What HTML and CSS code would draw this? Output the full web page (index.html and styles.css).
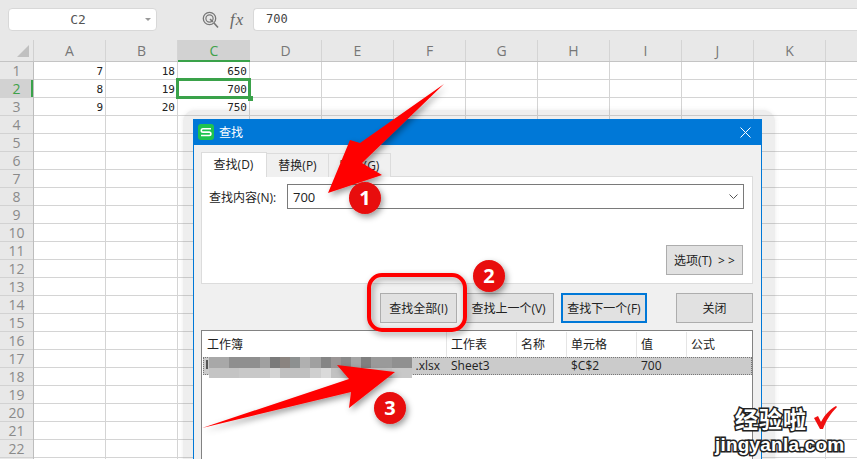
FILE: index.html
```html
<!DOCTYPE html>
<html lang="zh">
<head>
<meta charset="utf-8">
<title>查找</title>
<link rel="stylesheet" href="styles.css">
</head>
<body>
<div class="app">
  <div class="formula-bar">
    <div class="name-box"><span class="name-text">C2</span><span class="name-caret"></span></div>
    <svg class="zoom-icon" width="18" height="18" viewBox="0 0 18 18"><circle cx="7.500" cy="7.500" r="6.200" fill="none" stroke="#777" stroke-width="1.300"/><circle cx="7.500" cy="7.500" r="3.600" fill="none" stroke="#777" stroke-width="1.200"/><path d="M8 8l3 3M12 12l4 4.500" fill="none" stroke="#777" stroke-width="1.600"/></svg>
    <span class="fx">fx</span>
    <div class="formula-input">700</div>
  </div>
  <div class="col-head">
    <div class="corner"><span class="corner-tri"></span></div>
    <div class="col">A</div><div class="col">B</div><div class="col active">C</div><div class="col">D</div><div class="col">E</div><div class="col">F</div><div class="col">G</div><div class="col">H</div><div class="col">I</div><div class="col">J</div><div class="col">K</div><div class="col rest"></div>
  </div>
  <div class="sheet">
    <div class="row-head">
      <div class="rn">1</div><div class="rn active">2</div><div class="rn">3</div><div class="rn">4</div><div class="rn">5</div><div class="rn">6</div><div class="rn">7</div><div class="rn">8</div><div class="rn">9</div><div class="rn">10</div><div class="rn">11</div><div class="rn">12</div><div class="rn">13</div><div class="rn">14</div><div class="rn">15</div><div class="rn">16</div><div class="rn">17</div><div class="rn">18</div><div class="rn">19</div><div class="rn">20</div><div class="rn">21</div><div class="rn">22</div>
    </div>
    <div class="cells">
      <div class="cell">7</div><div class="cell">18</div><div class="cell">650</div>
      <div class="cell">8</div><div class="cell">19</div><div class="cell selected">700<span class="fill-handle"></span></div>
      <div class="cell">9</div><div class="cell">20</div><div class="cell">750</div>
    </div>
  </div>
</div>

<div class="dialog-halo"></div>
<section class="dialog">
  <header class="title-bar">
    <span class="logo"><svg width="16" height="16" viewBox="0 0 16 16"><rect width="16" height="16" rx="3" fill="#1ec34f"/><path d="M13 4.700H5a1.700 1.700 0 0 0 0 3.400h6.200a1.700 1.700 0 0 1 0 3.400H3" fill="none" stroke="#fff" stroke-width="1.600"/></svg></span>
    <span class="title">查找</span>
    <svg class="close-x" width="11" height="11" viewBox="0 0 11 11"><path d="M.5.5l10 10M10.500.5l-10 10" stroke="#fff" stroke-width="1"/></svg>
  </header>
  <div class="dialog-body">
    <div class="tabs">
      <div class="tab current">查找(D)</div>
      <div class="tab">替换(P)</div>
      <div class="tab">定位(G)</div>
    </div>
    <div class="panel">
      <div class="find-row">
        <label class="find-label">查找内容(N):</label>
        <div class="find-input"><span>700</span>
          <svg width="9" height="5" viewBox="0 0 9 5"><path d="M.5.500l4 4 4-4" fill="none" stroke="#555"/></svg>
        </div>
      </div>
      <button class="btn options">选项(T) &nbsp;&gt; &gt;</button>
    </div>
    <div class="actions">
      <button class="btn find-all">查找全部(I)</button>
      <button class="btn find-prev">查找上一个(V)</button>
      <button class="btn find-next">查找下一个(F)</button>
      <button class="btn close">关闭</button>
    </div>
    <div class="results">
      <div class="res-head">
        <div class="c1">工作簿</div><div class="c2">工作表</div><div class="c3">名称</div><div class="c4">单元格</div><div class="c5">值</div><div class="c6">公式</div>
      </div>
      <div class="res-row">
        <div class="c1 file">.xlsx</div><div class="c2">Sheet3</div><div class="c3"></div><div class="c4">$C$2</div><div class="c5">700</div><div class="c6"></div>
      </div>
      <div class="mosaic"><div class="mosaic-a"></div><div class="mosaic-b"></div></div>
    </div>
  </div>
</section>

<svg class="annot" width="857" height="459" viewBox="0 0 857 459">
  <defs><filter id="sh" x="-30%" y="-30%" width="160%" height="160%"><feDropShadow dx="2" dy="3" stdDeviation="3" flood-color="#000" flood-opacity=".4"/></filter></defs>
  <g filter="url(#sh)" fill="#f00">
    <path d="M444 84L360 143L350 140L328 193L382 175L362 163Z"/>
    <path d="M202 428L349 379L337 365L395 372L349 408L351 392Z"/>
    <rect x="369" y="275" width="96" height="55" rx="13" fill="none" stroke="#f00" stroke-width="4"/>
    <circle cx="365" cy="198" r="16" fill="#e80808"/>
    <circle cx="489" cy="276" r="16" fill="#e80808"/>
    <circle cx="390" cy="408" r="16" fill="#e80808"/>
  </g>
  <g class="badge-num"><text x="365" y="205">1</text><text x="489" y="283">2</text><text x="390" y="415">3</text></g>
</svg>

<div class="watermark">
  <div class="wm-top"><span class="wm-cn">经验啦</span><svg width="24" height="24" viewBox="0 0 24 24"><path d="M1 12l4-2 3 6C11 10 16 4 23 0l1 1C17 8 13 15 10 23H7Z" fill="#f01010"/></svg></div>
  <div class="wm-en">jingyanla.com</div>
</div>
</body>
</html>
```
FILE: styles.css
```css
* { box-sizing: border-box; }
html, body { margin: 0; padding: 0; width: 857px; height: 459px; overflow: hidden; background: #fff; }
body { position: relative; font-family: "Open Sans", "Noto Sans CJK SC", sans-serif; color: #222; }

/* Formula bar */
.formula-bar { height: 40px; background: #e8e8e8; display: flex; align-items: center; padding: 0 0 1px 8px; }
.name-box { width: 149px; height: 23px; background: #fff; border: 1px solid #d8d8d8; border-radius: 4px; display: flex; align-items: center; padding: 0 5px 0 0; }
.name-text { flex: 1; text-align: center; font-family: "DejaVu Sans Mono", monospace; font-size: 13px; color: #555; padding-left: 2px; }
.name-caret { width: 0; height: 0; border-left: 3px solid transparent; border-right: 3px solid transparent; border-top: 3px solid #999; }
.zoom-icon { margin-left: 45px; flex: none; }
.fx { font-family: "Liberation Serif", serif; font-style: italic; font-size: 17px; color: #666; margin-left: 10px; width: 23px; letter-spacing: 1px; }
.formula-input { flex: 1; height: 23px; background: #fff; border: 1px solid #d8d8d8; border-right: 0; border-radius: 4px 0 0 4px; font-family: "DejaVu Sans Mono", monospace; font-size: 12px; line-height: 21px; padding-left: 12px; color: #444; }

/* Column header */
.col-head { display: flex; height: 22px; background: #e8e8e8; border-bottom: 1px solid #c4c4c4; }
.corner { width: 34px; flex: none; border-right: 1px solid #d0d0d0; position: relative; }
.corner-tri { display: block; position: absolute; right: 4px; bottom: 4px; width: 0; height: 0; border-left: 12px solid transparent; border-bottom: 12px solid #c0c0c0; }
.col { width: 72px; flex: none; text-align: center; font-size: 14px; line-height: 21px; color: #777; border-right: 1px solid #d4d4d4; }
.col.rest { flex: 1; border-right: 0; }
.col.active { background: #d2d2d2; color: #3fa14a; border-bottom: 2px solid #3aa24a; height: 22px; border-right: 0; }

/* Sheet */
.sheet { display: flex; height: 397px; }
.row-head { width: 34px; flex: none; background: #e8e8e8; border-right: 1px solid #bdbdbd; }
.rn { height: 18px; text-align: center; font-size: 14px; line-height: 17px; color: #8a8a8a; border-bottom: 1px solid #d2d2d2; }
.rn.active { background: #d2d2d2; color: #3fa14a; box-shadow: inset -2px 0 0 #3aa24a; }
.cells {
  flex: 1;
  display: grid;
  grid-template-columns: repeat(3, 72px);
  grid-auto-rows: 18px;
  background-image:
    repeating-linear-gradient(to right, transparent 0 71px, #d4d4d4 71px 72px),
    repeating-linear-gradient(to bottom, transparent 0 17px, #d4d4d4 17px 18px);
}
.cell { font-family: "DejaVu Sans Mono", monospace; font-size: 11px; line-height: 19px; text-align: right; padding-right: 3px; color: #222; position: relative; }
.cell.selected::before { content: ""; position: absolute; inset: -2px -1px -1px -2px; border: 3px solid #3aa24a; }
.fill-handle { position: absolute; right: -3px; bottom: -3px; width: 5px; height: 5px; background: #3aa24a; }

/* Dialog */
.dialog-halo { position: absolute; left: 183px; top: 110px; width: 592px; height: 360px; background: rgba(120,120,120,.13); border-radius: 12px; box-shadow: 0 0 4px rgba(120,120,120,.15); }
.dialog { position: absolute; left: 193px; top: 119px; width: 569px; height: 345px; background: #f0f0f0; border: 1px solid #0078d7; border-top: 0; display: flex; flex-direction: column; }
.title-bar { height: 26px; flex: none; background: #0078d7; display: flex; align-items: center; padding-left: 4px; color: #fff; }
.logo { display: flex; width: 16px; height: 16px; }
.title { flex: 1; font-size: 12px; margin-left: 5px; }
.close-x { margin-right: 10px; }
.dialog-body { flex: 1; padding: 7px 8px 0 7px; display: flex; flex-direction: column; }
.tabs { display: flex; height: 24px; flex: none; position: relative; }
.tab { width: 62px; height: 24px; margin-top: 1px; text-align: center; font-size: 12px; line-height: 23px; background: #f0f0f0; border: 1px solid #dcdcdc; border-bottom: 0; border-left: 0; }
.tab.current { width: 66px; height: 25px; margin-top: 0; background: #fff; border-left: 1px solid #dcdcdc; line-height: 23px; padding-right: 1px; position: relative; z-index: 1; }
.panel { height: 108px; flex: none; background: #fff; border: 1px solid #dcdcdc; padding: 7px 8px 8px 7px; display: flex; flex-direction: column; justify-content: space-between; }
.find-row { display: flex; align-items: center; height: 25px; }
.find-label { width: 78px; flex: none; font-size: 12px; }
.find-input { flex: 1; height: 25px; border: 1px solid #7a7a7a; display: flex; align-items: center; justify-content: space-between; padding: 0 5px 0 5px; font-size: 13px; }
.btn { font-family: inherit; font-size: 12px; color: #222; background: #e1e1e1; border: 1px solid #adadad; padding: 0; height: 30px; }
.options { align-self: flex-end; width: 77px; margin-right: 1px; }
.actions { display: flex; justify-content: flex-end; align-items: center; height: 46px; flex: none; padding-top: 1px; }
.find-all { width: 77px; }
.find-prev { width: 91px; margin-left: 6px; }
.find-next { width: 86px; margin-left: 7px; border: 2px solid #0078d7; }
.close { width: 77px; margin-left: 29px; }
.results { flex: 1; background: #fff; border: 1px solid #828282; position: relative; width: 552px; }
.res-head { display: flex; height: 26px; align-items: center; font-size: 12px; color: #222; }
.res-head > div { height: 25px; line-height: 25px; border-right: 1px solid #e5e5e5; }
.res-row { display: flex; height: 18px; margin-left: 1px; width: 549px; background: #cbcbcb; outline: 1px dotted #777; outline-offset: -1px; font-size: 12px; line-height: 18px; }
.c1 { width: 245px; padding-left: 5px; }
.res-row .c1 { width: 244px; text-align: right; padding-right: 7px; }
.c2 { width: 70px; padding-left: 4px; }
.c3 { width: 50px; padding-left: 4px; }
.c4 { width: 70px; padding-left: 4px; }
.c5 { width: 50px; padding-left: 4px; }
.c6 { flex: 1; padding-left: 4px; }
.res-head .c6 { border-right: 0; }
.mosaic { position: absolute; left: 7px; top: 26px; width: 203px; }
.mosaic::before { content: ""; position: absolute; left: -3px; top: 3px; width: 2px; height: 9px; background: #555; }
.mosaic-a { height: 11px; background: linear-gradient(to right, #a8a8a8 0 10%, #8f8f8f 10% 25%, #a0a0a0 25% 30%, #7a7a7a 30% 35%, #8a8480 35% 40%, #8d9090 40% 45%, #b0b0b0 45% 50%, #a0a0a0 50% 55%, #858585 55% 60%, #9a9595 60% 65%, #8a8a8a 65% 70%, #a5a5a5 70% 75%, #808080 75% 80%, #9a9a9a 80% 90%, #909090 90% 100%); }
.mosaic-b { height: 10px; background: linear-gradient(to right, #c4c4c4 0 15%, #c8c8c8 15% 30%, #d4d4d4 30% 35%, #c0c0c0 35% 50%, #cfcfcf 50% 55%, #dadada 55% 60%, #c2c2c2 60% 90%, #c8c8c8 90% 100%); }

/* Annotations */
.annot { position: absolute; left: 0; top: 0; pointer-events: none; }
.badge-num text { font-family: "Open Sans", sans-serif; font-weight: 700; font-size: 20px; fill: #fff; text-anchor: middle; }

/* Watermark */
.watermark { position: absolute; left: 716px; top: 404px; width: 140px; font-family: "Noto Sans CJK SC", sans-serif; }
.wm-top { display: flex; align-items: center; padding-left: 19px; gap: 6px; height: 28px; }
.wm-cn { font-size: 23px; font-weight: 700; line-height: 28px; color: #fff; -webkit-text-stroke: 3px #222; paint-order: stroke fill; letter-spacing: 1px; }
.wm-en { font-family: "Liberation Sans", sans-serif; font-size: 19px; font-weight: 700; line-height: 20px; margin-top: 3px; margin-left: -1px; color: #fff; -webkit-text-stroke: 3px #222; paint-order: stroke fill; letter-spacing: .2px; }
```
